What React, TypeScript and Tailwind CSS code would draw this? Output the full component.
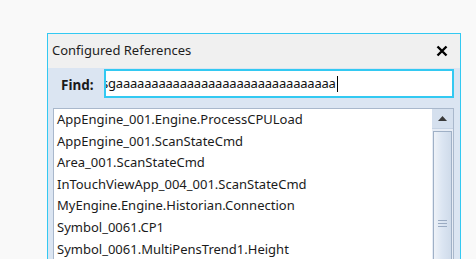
const refs = [
  "AppEngine_001.Engine.ProcessCPULoad",
  "AppEngine_001.ScanStateCmd",
  "Area_001.ScanStateCmd",
  "InTouchViewApp_004_001.ScanStateCmd",
  "MyEngine.Engine.Historian.Connection",
  "Symbol_0061.CP1",
  "Symbol_0061.MultiPensTrend1.Height",
];

export default function App() {
  return (
    <div className="h-[259px] w-[476px] overflow-hidden bg-[#f9f9f9] pl-[47px] pt-[33px] font-['Noto_Sans',sans-serif]">
      <div className="h-[240px] w-[414px] border border-[#33c9f2] bg-[#f0f0f0]">
        {/* title */}
        <div className="flex h-[34px] items-center justify-between pl-[4px] pr-[12px]">
          <span className="text-[13px] text-[#1e1e1e]">Configured References</span>
          <svg width="12" height="12" viewBox="0 0 12 12">
            <path d="M1.5 1.5 L10.5 10.5 M10.5 1.5 L1.5 10.5" stroke="#000" strokeWidth="2.4" />
          </svg>
        </div>
        {/* find */}
        <div className="h-[206px] bg-[#dbe5f2] pl-[5px] pr-[6px] pt-px">
          <div className="flex h-[29px] items-center">
            <span className="w-[51px] pl-[8px] pt-[3px] text-[13.5px] font-bold text-[#1a1a1a]">Find:</span>
            <div className="flex h-[29px] w-[350px] items-center overflow-hidden border-2 border-[#33c9f2] bg-white">
              <span className="ml-[-4px] whitespace-nowrap text-[13px] tracking-[-0.2px] text-[#111]">
                sgaaaaaaaaaaaaaaaaaaaaaaaaaaaaaaa
              </span>
              <span className="ml-px h-[16px] w-px bg-black" />
            </div>
          </div>
          <div className="mt-[10px] flex h-[170px] border border-[#a9b8cc] bg-white">
            <div className="flex-1 pl-[3px]">
              {refs.map((r) => (
                <div key={r} className="flex h-[21.6px] items-center whitespace-nowrap text-[13px] text-[#1b1b1b]">
                  {r}
                </div>
              ))}
            </div>
            <div className="flex w-[21px] flex-col bg-[#e6ecf5]">
              <div className="flex h-[20px] items-center justify-center border-b border-[#c5d2e3] bg-[#d5e0ee]">
                <svg width="9" height="5" viewBox="0 0 9 5">
                  <path d="M0 5 L4.5 0 L9 5 Z" fill="#3a3a3a" />
                </svg>
              </div>
              <div className="mx-px mt-[2px] flex flex-1 flex-col items-center border border-[#9fb0c6] bg-gradient-to-r from-[#eef2f8] via-[#dbe5f2] to-[#cfdbea]">
                <div className="mt-[88px] flex flex-col gap-[2px]">
                  <span className="h-px w-[9px] bg-[#9aabc2]" />
                  <span className="h-px w-[9px] bg-[#9aabc2]" />
                  <span className="h-px w-[9px] bg-[#9aabc2]" />
                </div>
              </div>
            </div>
          </div>
        </div>
      </div>
    </div>
  );
}
